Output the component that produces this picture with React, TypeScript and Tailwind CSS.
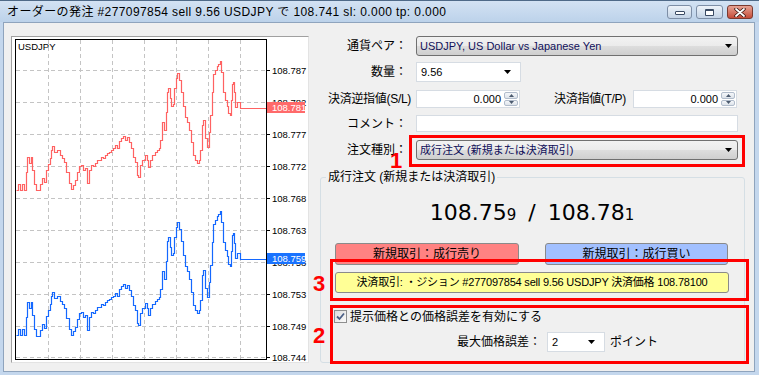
// Order window (MT4 "オーダーの発注") with tick chart on the left and the
// order form on the right. Red boxes + digits are annotation overlays.

const RED_PTS: number[][] = [
  [16, 190], [18, 184], [20, 190], [22, 184], [24, 190], [26, 172], [27, 157], [29, 163], [31, 157], [32, 170],
  [34, 184], [36, 190], [38, 190], [40, 184], [42, 178], [44, 182], [46, 170], [48, 164], [50, 158], [51, 150],
  [52, 146], [54, 152], [57, 150], [60, 155], [62, 158], [64, 162], [66, 172], [69, 183], [71, 189], [73, 185],
  [75, 180], [77, 172], [79, 166], [81, 165], [83, 170], [85, 168], [87, 183], [89, 170], [91, 165], [93, 166],
  [95, 163], [97, 160], [99, 160], [101, 157], [103, 158], [105, 155], [107, 153], [109, 152], [111, 150],
  [113, 148], [115, 145], [117, 148], [119, 141], [121, 138], [123, 136], [125, 140], [127, 137], [129, 142],
  [131, 148], [133, 157], [135, 162], [137, 175], [138, 177], [140, 165], [142, 160], [145, 155], [147, 160],
  [148, 167], [150, 160], [152, 155], [155, 152], [157, 150], [159, 148], [160, 140], [162, 122], [164, 130],
  [166, 112], [167, 92], [168, 88], [170, 98], [171, 106], [173, 104], [174, 88], [176, 78], [177, 73],
  [179, 80], [181, 92], [183, 106], [185, 117], [187, 122], [189, 130], [191, 142], [193, 155], [195, 160],
  [197, 163], [199, 160], [200, 150], [202, 125], [203, 120], [205, 138], [207, 147], [209, 132], [210, 115],
  [212, 92], [213, 74], [215, 70], [217, 66], [218, 64], [220, 61], [221, 72], [223, 92], [225, 100],
  [227, 106], [228, 113], [230, 115], [231, 100], [232, 84], [233, 82], [234, 92], [235, 107], [237, 102],
  [239, 102], [240, 108], [266, 108],
];

const GRID_X = [48, 80, 112, 144, 176, 208, 240];
const LEVELS: [number, string][] = [
  [70, '108.787'], [102, '108.782'], [134, '108.777'], [166, '108.772'], [198, '108.768'],
  [230, '108.763'], [262, '108.758'], [294, '108.753'], [326, '108.749'], [357, '108.744'],
];

// tick chart drawn as a staircase, the way MT4 renders dense ticks
function stepPath(pts: number[][], shift: (x: number) => number) {
  return pts
    .map(([x, y], i) => {
      const yy = Math.round(y + shift(x));
      return i ? `H${x} V${yy}` : `M${x} ${yy}`;
    })
    .join(' ');
}

const AXIS_FONT = 'Liberation Sans, Arial, sans-serif';

function Chart() {
  return (
    <div className="h-[327px] w-[298px] shrink-0 border border-[#a0a0a0] border-r-[#e3e3e3] border-b-[#e3e3e3] bg-white">
      <svg width="296" height="325" viewBox="12 37 296 325" className="block">
        {GRID_X.map((x) => (
          <line key={x} x1={x + 0.5} y1={40} x2={x + 0.5} y2={359} stroke="#c4c4c4" strokeDasharray="4 3" />
        ))}
        {LEVELS.map(([y]) => (
          <line key={y} x1={16} y1={y + 0.5} x2={266} y2={y + 0.5} stroke="#c4c4c4" strokeDasharray="4 3" />
        ))}
        <g transform="translate(0.5 0.5)">
          <path d={stepPath(RED_PTS, () => 0)} fill="none" stroke="#ff6262" strokeWidth="1.2" />
          <path
            d={stepPath(RED_PTS, (x) => 145 + (x - 16) * 0.026)}
            fill="none"
            stroke="#1468ff"
            strokeWidth="1.2"
          />
        </g>
        <rect x={15.5} y={39.5} width={251} height={320} fill="none" stroke="#000" />
        {LEVELS.map(([y, t]) => (
          <g key={t}>
            <line x1={266} y1={y + 0.5} x2={270} y2={y + 0.5} stroke="#000" />
            <text x={272} y={y + 3.5} fontSize="9.5" fontFamily={AXIS_FONT} fill="#000">
              {t}
            </text>
          </g>
        ))}
        <rect x={267} y={102} width={38} height={11} fill="#ff6a6a" />
        <text x={272} y={110.5} fontSize="9.5" fontFamily={AXIS_FONT} fill="#fff">
          108.781
        </text>
        <rect x={267} y={253} width={38} height={11} fill="#1a73ff" />
        <text x={272} y={261.5} fontSize="9.5" fontFamily={AXIS_FONT} fill="#fff">
          108.759
        </text>
        <text x={18} y={50} fontSize="9.5" fontFamily={AXIS_FONT} fill="#000">
          USDJPY
        </text>
      </svg>
    </div>
  );
}

function DownArrow() {
  return (
    <svg width="7" height="4" viewBox="0 0 7 4" className="shrink-0">
      <path d="M0 0H7L3.5 4Z" fill="#000" />
    </svg>
  );
}

function Combo({ text, w }: { text: string; w: string }) {
  return (
    <div
      className={`flex h-[20px] ${w} items-center rounded-[3px] border border-[#707070] bg-[linear-gradient(#f2f2f2,#ebebeb_50%,#dddddd_50%,#cfcfcf)] pl-[3px] pr-[5px]`}
    >
      <span className="flex-1 truncate text-[11px] text-[#10105a]">{text}</span>
      <DownArrow />
    </div>
  );
}

function EditCombo({ text, w }: { text: string; w: string }) {
  return (
    <div className={`flex h-[20px] ${w} items-center border border-[#d6dce3] bg-white pl-[4px] pr-[9px]`}>
      <span className="flex-1 text-[11px]">{text}</span>
      <DownArrow />
    </div>
  );
}

function SpinBtn({ up }: { up?: boolean }) {
  return (
    <div className="flex flex-1 items-center justify-center rounded-[2px] border border-[#b1bccb] bg-linear-to-b from-[#f5f7fa] to-[#dde3ea]">
      <svg width="5" height="3" viewBox="0 0 5 3">
        <path d={up ? 'M2.5 0L5 3H0Z' : 'M0 0H5L2.5 3Z'} fill="#4b5a6e" />
      </svg>
    </div>
  );
}

function Spinner() {
  return (
    <div className="flex h-[18px] w-[104px] items-stretch border border-[#d6dce3] bg-white">
      <span className="flex flex-1 items-center justify-end pr-[3px] text-[11px]">0.000</span>
      <div className="flex w-[15px] flex-col gap-px py-px pr-px">
        <SpinBtn up />
        <SpinBtn />
      </div>
    </div>
  );
}

function Label({ children }: { children: React.ReactNode }) {
  return <div className="w-[91px] shrink-0 text-right text-[12px] leading-none">{children}</div>;
}

function Checkbox() {
  return (
    <div className="flex h-[13px] w-[13px] items-center justify-center border border-[#8e8f8f] bg-linear-to-br from-[#dcdcdc] to-[#fbfbfb]">
      <svg width="9" height="9" viewBox="0 0 9 9">
        <path d="M1 4.5L3.5 7L8 1.5" fill="none" stroke="#4a5f86" strokeWidth="1.8" />
      </svg>
    </div>
  );
}

function TitleBar() {
  return (
    <div className="flex h-[22px] items-center justify-between border-t border-[#4f6a88] bg-linear-to-b from-[#d3e2f3] to-[#bcd2ea] pl-[7px] pr-[6px]">
      <span className="text-[12px] leading-none tracking-[0.4px] text-black">
        オーダーの発注 #277097854 sell 9.56 USDJPY で 108.741 sl: 0.000 tp: 0.000
      </span>
      <div className="flex gap-[4px] pt-px">
        <div className="flex h-[14px] w-[25px] items-end justify-center rounded-[3px] border border-[#7d8ea6] bg-linear-to-b from-[#eef3f9] to-[#c3d3e6] pb-[3px]">
          <div className="h-[4px] w-[10px] rounded-[1px] border border-[#3a4a63] bg-white" />
        </div>
        <div className="flex h-[14px] w-[27px] items-center justify-center rounded-[3px] border border-[#7d8ea6] bg-linear-to-b from-[#eef3f9] to-[#c3d3e6]">
          <div className="h-[7px] w-[9px] rounded-[1px] border border-t-2 border-[#3a4a63] bg-white" />
        </div>
        <div className="flex h-[14px] w-[26px] items-center justify-center rounded-[3px] border border-[#7a3a30] bg-linear-to-b from-[#e5a294] to-[#c54a38]">
          <svg width="12" height="9" viewBox="0 0 12 9">
            <path d="M2 1L10 8M10 1L2 8" stroke="#3a1510" strokeWidth="3.4" strokeLinecap="round" />
            <path d="M2 1L10 8M10 1L2 8" stroke="#fff" strokeWidth="1.8" strokeLinecap="round" />
          </svg>
        </div>
      </div>
    </div>
  );
}

function OrderForm() {
  return (
    <div className="ml-[7px] flex w-[430px] flex-col">
      <div className="flex items-center gap-[9px]">
        <Label>通貨ペア：</Label>
        <Combo w="w-[322px]" text="USDJPY, US Dollar vs Japanese Yen" />
      </div>
      <div className="mt-[6px] flex items-center gap-[9px]">
        <Label>数量：</Label>
        <EditCombo w="w-[105px]" text="9.56" />
      </div>
      <div className="mt-[8px] flex items-center">
        <div className="w-[100px] shrink-0 pr-[5px] text-right text-[12px] leading-none tracking-[-0.3px]">
          決済逆指値(S/L)
        </div>
        <Spinner />
        <div className="w-[113px] pr-[7px] text-right text-[12px] leading-none tracking-[-0.3px]">
          決済指値(T/P)
        </div>
        <Spinner />
      </div>
      <div className="mt-[7px] flex items-center gap-[9px]">
        <Label>コメント：</Label>
        <div className="h-[17px] w-[322px] border border-[#d6dce3] bg-white" />
      </div>
      <div className="mt-[8px] flex items-center gap-[9px]">
        <Label>注文種別：</Label>
        <Combo w="w-[322px]" text="成行注文 (新規または決済取引)" />
      </div>

      <div className="relative ml-[4px] mt-[17px] h-[186px] w-[425px] rounded-[3px] border border-[#d5dfe5]">
        <span className="absolute -top-[9px] left-[5px] bg-[#f0f0f0] px-[2px] text-[12px] leading-[16px]">
          成行注文 (新規または決済取引)
        </span>
        <div className="flex flex-col pl-[14px] pt-[20px]">
          <div className="flex h-[30px] w-[394px] items-baseline justify-center font-['DejaVu_Sans',sans-serif] text-[22px] leading-[30px]">
            108.75<span className="text-[15px]">9</span>
            <span className="px-[12px]">/</span>
            108.78<span className="text-[15px]">1</span>
          </div>
          <div className="mt-[15px] flex gap-[26px]">
            <div className="flex h-[22px] w-[184px] items-center justify-center rounded-[3px] border border-[#8a8a8a] bg-[#ff8282] text-[12px]">
              新規取引：成行売り
            </div>
            <div className="flex h-[22px] w-[183px] items-center justify-center rounded-[3px] border border-[#8a8a8a] bg-[#a2c0ff] text-[12px]">
              新規取引：成行買い
            </div>
          </div>
          <div className="mt-[7px] flex h-[21px] w-[394px] items-center justify-center rounded-[3px] border border-[#8a8a8a] bg-[#ffff96] text-[11px] tracking-[-0.2px]">
            決済取引: ・ジション #277097854 sell 9.56 USDJPY 決済価格 108.78100
          </div>
          <div className="-ml-px mt-[17px] flex items-center gap-[3px]">
            <Checkbox />
            <span className="text-[12px] leading-none">提示価格との価格誤差を有効にする</span>
          </div>
          <div className="mt-[9px] flex items-center pl-[122px]">
            <span className="w-[90px] text-[12px] leading-none">最大価格誤差：</span>
            <EditCombo w="w-[58px]" text="2" />
            <span className="ml-[5px] text-[12px] leading-none">ポイント</span>
          </div>
        </div>
      </div>
    </div>
  );
}

export default function App() {
  return (
    <div className="relative h-[375px] w-[759px] overflow-hidden bg-[#c4d7ed] font-['Liberation_Sans','Noto_Sans_CJK_JP',sans-serif] text-black">
      <TitleBar />
      <div className="ml-[3px] flex h-[350px] w-[752px] border border-[#8fa4bd] bg-[#f0f0f0] pl-[7px] pt-[13px]">
        <Chart />
        <OrderForm />
      </div>

      {/* annotation overlays */}
      <div className="pointer-events-none absolute left-[409px] top-[135px] h-[32px] w-[336px] border-[3px] border-[#ff0000]" />
      <div className="pointer-events-none absolute left-[330px] top-[259px] h-[42px] w-[419px] border-[3px] border-[#ff0000]" />
      <div className="pointer-events-none absolute left-[330px] top-[305px] h-[59px] w-[419px] border-[3px] border-[#ff0000]" />
      <span className="absolute left-[390px] top-[150px] text-[22px] font-bold leading-none text-[#ff0000]">1</span>
      <span className="absolute left-[313px] top-[273px] text-[22px] font-bold leading-none text-[#ff0000]">3</span>
      <span className="absolute left-[313px] top-[325px] text-[22px] font-bold leading-none text-[#ff0000]">2</span>
    </div>
  );
}
